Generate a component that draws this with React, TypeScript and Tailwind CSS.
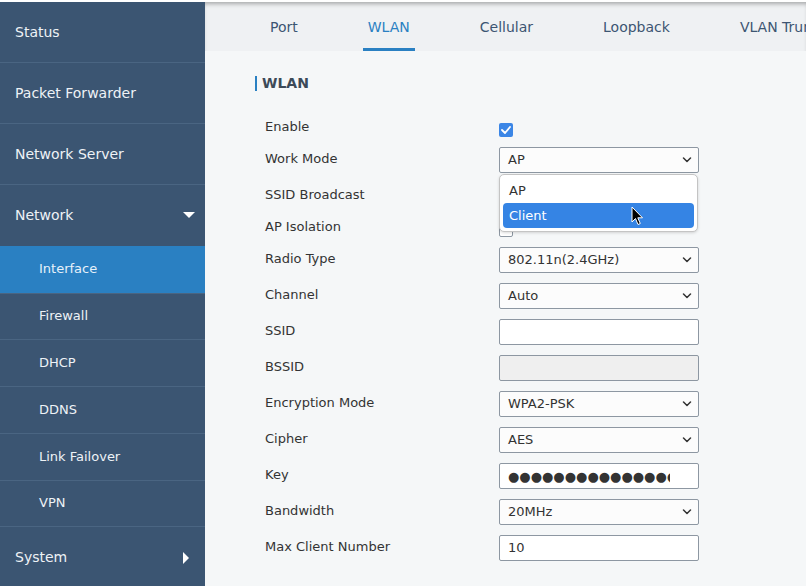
import React from "react";

const Chevron = () => (
  <svg width="10" height="6" viewBox="0 0 10 6" className="shrink-0">
    <path d="M1.5 1 L5 4.5 L8.5 1" fill="none" stroke="#333" strokeWidth="1.5" strokeLinecap="round" strokeLinejoin="round" />
  </svg>
);

const SelectBox = ({ value, children }: { value: string; children?: React.ReactNode }) => (
  <div className="relative w-[200px] h-[26px] mt-[5px] border border-[#8d97a2] rounded-[2px] bg-[#fcfcfc] flex items-center pl-[8px] pr-[6px] text-[13px] text-[#333]">
    <span className="flex-1">{value}</span>
    <Chevron />
    {children}
  </div>
);

const TextBox = ({ value = "", disabled = false }: { value?: string; disabled?: boolean }) => (
  <div
    className={`w-[200px] h-[26px] mt-[5px] border border-[#8d97a2] rounded-[2px] flex items-center pl-[8px] text-[13px] text-[#333] ${
      disabled ? "bg-[#efefef]" : "bg-white"
    }`}
  >
    {value}
  </div>
);

const Check = ({ checked }: { checked: boolean }) =>
  checked ? (
    <div className="w-[14px] h-[14px] mt-[13px] rounded-[2px] bg-[#3b86e6] flex items-center justify-center">
      <svg width="10" height="8" viewBox="0 0 10 8">
        <path d="M1 4 L4 7 L9 1" fill="none" stroke="white" strokeWidth="1.8" strokeLinecap="round" strokeLinejoin="round" />
      </svg>
    </div>
  ) : (
    <div className="w-[14px] h-[14px] mt-[13px] rounded-[2px] border border-[#8d97a2] bg-white" />
  );

const Row = ({ label, h, children }: { label: string; h: "c" | "f"; children: React.ReactNode }) => (
  <div className={`flex items-start ${h === "c" ? "h-[32px]" : "h-[36px]"}`}>
    <div className="w-[234px] h-[34px] flex items-center text-[13px] text-[#333]">{label}</div>
    {children}
  </div>
);

const Cursor = () => (
  <svg width="13" height="20" viewBox="0 0 13 20" className="absolute left-[131px] top-[31px]">
    <path d="M1 1 L1 16 L4.5 12.5 L7 18.5 L9.3 17.5 L6.8 11.8 L11.5 11.8 Z" fill="black" stroke="white" strokeWidth="1" strokeLinejoin="round" />
  </svg>
);

export default function App() {
  const top = ["Status", "Packet Forwarder", "Network Server"];
  const subs = ["Firewall", "DHCP", "DDNS", "Link Failover", "VPN"];
  const tabs = ["Port", "WLAN", "Cellular", "Loopback", "VLAN Trunk"];
  return (
    <div className="w-[806px] h-[586px] overflow-hidden bg-white flex flex-col" style={{ fontFamily: '"DejaVu Sans", sans-serif' }}>
      <div className="h-[2px] bg-white shrink-0" />
      <div className="flex flex-1 min-h-0">
        <aside className="w-[205px] shrink-0 bg-[#3b5572] flex flex-col text-[#eef2f6]">
          {top.map((t) => (
            <div key={t} className="h-[61px] shrink-0 border-b border-[#4a6582] flex items-center pl-[15px] text-[14px]">
              {t}
            </div>
          ))}
          <div className="h-[60.5px] shrink-0 flex items-center pl-[15px] pr-[10px] text-[14px]">
            <span className="flex-1">Network</span>
            <svg width="12" height="6" viewBox="0 0 12 6">
              <path d="M0 0 L12 0 L6 6 Z" fill="white" />
            </svg>
          </div>
          <div className="h-[47px] shrink-0 bg-[#2a80c2] flex items-center pl-[39px] text-[13px] text-[#e6f1fa]">Interface</div>
          {subs.map((s) => (
            <div key={s} className="h-[46.8px] shrink-0 border-t border-[#4a6582] flex items-center pl-[39px] pb-[1px] text-[13px]">
              {s}
            </div>
          ))}
          <div className="h-[62px] shrink-0 border-t border-[#4a6582] flex items-center pl-[15px] pr-[16px] text-[14px]">
            <span className="flex-1">System</span>
            <svg width="6" height="12" viewBox="0 0 6 12">
              <path d="M0 0 L6 6 L0 12 Z" fill="white" />
            </svg>
          </div>
        </aside>
        <main className="flex-1 min-w-0 bg-[#f5f7f8] flex flex-col">
          <div className="h-[49px] shrink-0 bg-[#eff1f3] shadow-[inset_0_4px_4px_-2px_rgba(0,0,0,0.3)] flex pl-[30px] whitespace-nowrap overflow-hidden">
            {tabs.map((t) => (
              <div key={t} className="px-[30px] h-full">
                <div
                  className={`h-full px-[5px] flex items-center pt-[5px] border-b-[3px] text-[14px] ${
                    t === "WLAN" ? "border-[#2a80c2] text-[#2a80c2]" : "border-transparent text-[#3d5572]"
                  }`}
                >
                  {t}
                </div>
              </div>
            ))}
          </div>
          <div className="pl-[50px] pt-[24px]">
            <div className="flex items-center h-[16px]">
              <div className="w-[2px] h-[15px] bg-[#2a80c2]" />
              <div className="ml-[5px] text-[14px] font-bold text-[#3c4a58]">WLAN</div>
            </div>
            <div className="pl-[10px] mt-[19px]">
              <Row label="Enable" h="c">
                <Check checked />
              </Row>
              <Row label="Work Mode" h="f">
                <SelectBox value="AP">
                  <div className="absolute left-[-1px] top-[26px] w-[199px] z-10 bg-white border border-[#c4c4c4] rounded-[5px] shadow-[0_1px_3px_rgba(0,0,0,0.15)] p-[3px]">
                    <div className="h-[25px] flex items-center pl-[6px] text-[13px] text-[#333]">AP</div>
                    <div className="h-[25px] flex items-center pl-[6px] text-[13px] text-white bg-[#3584e4] rounded-[4px]">Client</div>
                    <Cursor />
                  </div>
                </SelectBox>
              </Row>
              <Row label="SSID Broadcast" h="c">
                <Check checked />
              </Row>
              <Row label="AP Isolation" h="c">
                <Check checked={false} />
              </Row>
              <Row label="Radio Type" h="f">
                <SelectBox value="802.11n(2.4GHz)" />
              </Row>
              <Row label="Channel" h="f">
                <SelectBox value="Auto" />
              </Row>
              <Row label="SSID" h="f">
                <TextBox />
              </Row>
              <Row label="BSSID" h="f">
                <TextBox disabled />
              </Row>
              <Row label="Encryption Mode" h="f">
                <SelectBox value="WPA2-PSK" />
              </Row>
              <Row label="Cipher" h="f">
                <SelectBox value="AES" />
              </Row>
              <Row label="Key" h="f">
                <div className="w-[200px] h-[26px] mt-[5px] border border-[#8d97a2] rounded-[2px] bg-white flex items-center pl-[8px]">
                  <div className="w-[162px] overflow-hidden whitespace-nowrap text-[13px] text-[#333] leading-none">
                    {"●".repeat(20)}
                  </div>
                </div>
              </Row>
              <Row label="Bandwidth" h="f">
                <SelectBox value="20MHz" />
              </Row>
              <Row label="Max Client Number" h="f">
                <TextBox value="10" />
              </Row>
            </div>
          </div>
        </main>
      </div>
    </div>
  );
}
